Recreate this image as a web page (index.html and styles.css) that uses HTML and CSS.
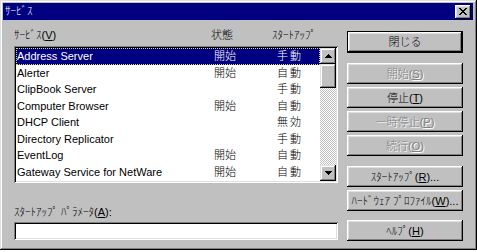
FILE: index.html
```html
<!DOCTYPE html>
<html lang="ja">
<head>
<meta charset="utf-8">
<title>ｻｰﾋﾞｽ</title>
<link rel="stylesheet" href="styles.css">
</head>
<body>
<div class="window">
  <div class="titlebar">
    <span class="title">ｻｰﾋﾞｽ</span>
    <span class="close">
      <svg width="8" height="7" viewBox="0 0 8 7" shape-rendering="crispEdges">
        <path d="M0 0h2v1h-2zM6 0h2v1h-2zM1 1h2v1h-2zM5 1h2v1h-2zM2 2h4v1h-4zM3 3h2v1h-2zM2 4h4v1h-4zM1 5h2v1h-2zM5 5h2v1h-2zM0 6h2v1h-2zM6 6h2v1h-2z" fill="#000"/>
      </svg>
    </span>
  </div>
  <div class="body">
    <div class="left">
      <div class="headers">
        <span>ｻｰﾋﾞｽ(<u>V</u>)</span>
        <span>状態</span>
        <span>ｽﾀｰﾄｱｯﾌﾟ</span>
      </div>
      <div class="listbox">
        <div class="rows">
          <div class="row sel"><span class="c-name">Address Server</span><span class="c-status">開始</span><span class="c-start">手動</span></div>
          <div class="row"><span class="c-name">Alerter</span><span class="c-status">開始</span><span class="c-start">自動</span></div>
          <div class="row"><span class="c-name">ClipBook Server</span><span class="c-status"></span><span class="c-start">手動</span></div>
          <div class="row"><span class="c-name">Computer Browser</span><span class="c-status">開始</span><span class="c-start">自動</span></div>
          <div class="row"><span class="c-name">DHCP Client</span><span class="c-status"></span><span class="c-start">無効</span></div>
          <div class="row"><span class="c-name">Directory Replicator</span><span class="c-status"></span><span class="c-start">手動</span></div>
          <div class="row"><span class="c-name">EventLog</span><span class="c-status">開始</span><span class="c-start">自動</span></div>
          <div class="row"><span class="c-name">Gateway Service for NetWare</span><span class="c-status">開始</span><span class="c-start">自動</span></div>
        </div>
        <div class="scrollbar">
          <span class="sb-btn">
            <svg width="7" height="4" viewBox="0 0 7 4" shape-rendering="crispEdges"><path d="M3 0h1v1h1v1h1v1h1v1h-7v-1h1v-1h1v-1h1z" fill="#000"/></svg>
          </span>
          <span class="sb-thumb"></span>
          <span class="sb-track"></span>
          <span class="sb-btn">
            <svg width="7" height="4" viewBox="0 0 7 4" shape-rendering="crispEdges"><path d="M0 0h7v1h-1v1h-1v1h-1v1h-1v-1h-1v-1h-1v-1h-1z" fill="#000"/></svg>
          </span>
        </div>
      </div>
      <div class="param-label">ｽﾀｰﾄｱｯﾌﾟ ﾊﾟﾗﾒｰﾀ(<u>A</u>):</div>
      <div class="input"></div>
    </div>
    <div class="right">
      <div class="btn default">閉じる</div>
      <div class="btn disabled gap">開始(<u>S</u>)</div>
      <div class="btn">停止(<u>T</u>)</div>
      <div class="btn disabled">一時停止(<u>P</u>)</div>
      <div class="btn disabled">続行(<u>O</u>)</div>
      <div class="btn gap">ｽﾀｰﾄｱｯﾌﾟ(<u>R</u>)...</div>
      <div class="btn">ﾊｰﾄﾞｳｪｱ ﾌﾟﾛﾌｧｲﾙ(<u>W</u>)...</div>
      <div class="btn gap2">ﾍﾙﾌﾟ(<u>H</u>)</div>
    </div>
  </div>
</div>
</body>
</html>
```

FILE: styles.css
```css
html, body {
  margin: 0;
  padding: 0;
  background: #ffffff;
}

body {
  font-family: "Liberation Sans", "Noto Sans CJK JP", sans-serif;
  font-size: 11px;
  font-weight: 300;
  color: #000;
}

.window {
  width: 477px;
  height: 250px;
  box-sizing: border-box;
  background: #c0c0c0;
  padding: 3px;
  box-shadow: inset -1px -1px #000, inset 1px 1px #dfdfdf, inset -2px -2px #808080, inset 2px 2px #fff;
  display: flex;
  flex-direction: column;
}

.titlebar {
  height: 17px;
  background: #000080;
  color: #fff;
  display: flex;
  align-items: center;
  justify-content: space-between;
  padding: 0 2px 0 2px;
  margin-right: 1px;
}

.title {
  font-size: 11px;
  line-height: 17px;
}

.close {
  width: 16px;
  height: 14px;
  box-sizing: border-box;
  background: #c0c0c0;
  box-shadow: inset -1px -1px #000, inset 1px 1px #fff, inset -2px -2px #808080, inset 2px 2px #dfdfdf;
  display: flex;
  align-items: center;
  justify-content: center;
}

.close svg { display: block; }

.body {
  display: flex;
  padding: 7px 0 0 11px;
  gap: 9px;
}

.left {
  width: 324px;
  display: flex;
  flex-direction: column;
}

.headers {
  display: grid;
  grid-template-columns: 197px 61px 1fr;
  height: 16px;
  line-height: 16px;
  margin-bottom: 1px;
}

.listbox {
  margin-top: 2px;
  height: 137px;
  box-sizing: border-box;
  background: #fff;
  box-shadow: inset 1px 1px #808080, inset -1px -1px #fff, inset 2px 2px #000, inset -2px -2px #dfdfdf;
  padding: 2px;
  display: flex;
}

.rows {
  flex: 1;
  display: flex;
  flex-direction: column;
}

.row {
  display: grid;
  grid-template-columns: 197px 63px 1fr;
  height: 16.5px;
  line-height: 17px;
  padding-left: 1px;
  white-space: nowrap;
}

.row.sel {
  background: #000080;
  color: #fff;
  outline: 1px dotted #d8d860;
  outline-offset: -1px;
}

.c-start {
  letter-spacing: 2px;
}

.scrollbar {
  width: 16px;
  display: flex;
  flex-direction: column;
}

.sb-btn {
  width: 16px;
  height: 16px;
  box-sizing: border-box;
  background: #c0c0c0;
  box-shadow: inset -1px -1px #000, inset 1px 1px #dfdfdf, inset -2px -2px #808080, inset 2px 2px #fff;
  display: flex;
  align-items: center;
  justify-content: center;
}

.sb-btn svg { display: block; }

.sb-thumb {
  height: 24px;
  background: #c0c0c0;
  box-shadow: inset -1px -1px #000, inset 1px 1px #dfdfdf, inset -2px -2px #808080, inset 2px 2px #fff;
}

.sb-track {
  flex: 1;
  background: repeating-conic-gradient(#ffffff 0 25%, #c0c0c0 0 50%) 0 0 / 2px 2px;
}

.param-label {
  margin-top: 22px;
  line-height: 14px;
  height: 14px;
}

.input {
  margin-top: 3px;
  height: 18px;
  background: #fff;
  box-shadow: inset 1px 1px #808080, inset -1px -1px #fff, inset 2px 2px #000, inset -2px -2px #dfdfdf;
}

.right {
  width: 116px;
  display: flex;
  flex-direction: column;
  gap: 3px;
  padding-top: 4px;
}

.btn {
  height: 21px;
  box-sizing: border-box;
  background: #c0c0c0;
  box-shadow: inset -1px -1px #000, inset 1px 1px #fff, inset -2px -2px #808080, inset 2px 2px #dfdfdf;
  display: flex;
  align-items: center;
  justify-content: center;
  white-space: nowrap;
  line-height: 14px;
}

.btn.default {
  border: 1px solid #000;
  height: 22px;
}

.btn.gap {
  margin-top: 7px;
}

.btn.gap2 {
  margin-top: 6px;
}

.btn.disabled {
  color: #808080;
  text-shadow: 1px 1px 0 #fff;
}
```
